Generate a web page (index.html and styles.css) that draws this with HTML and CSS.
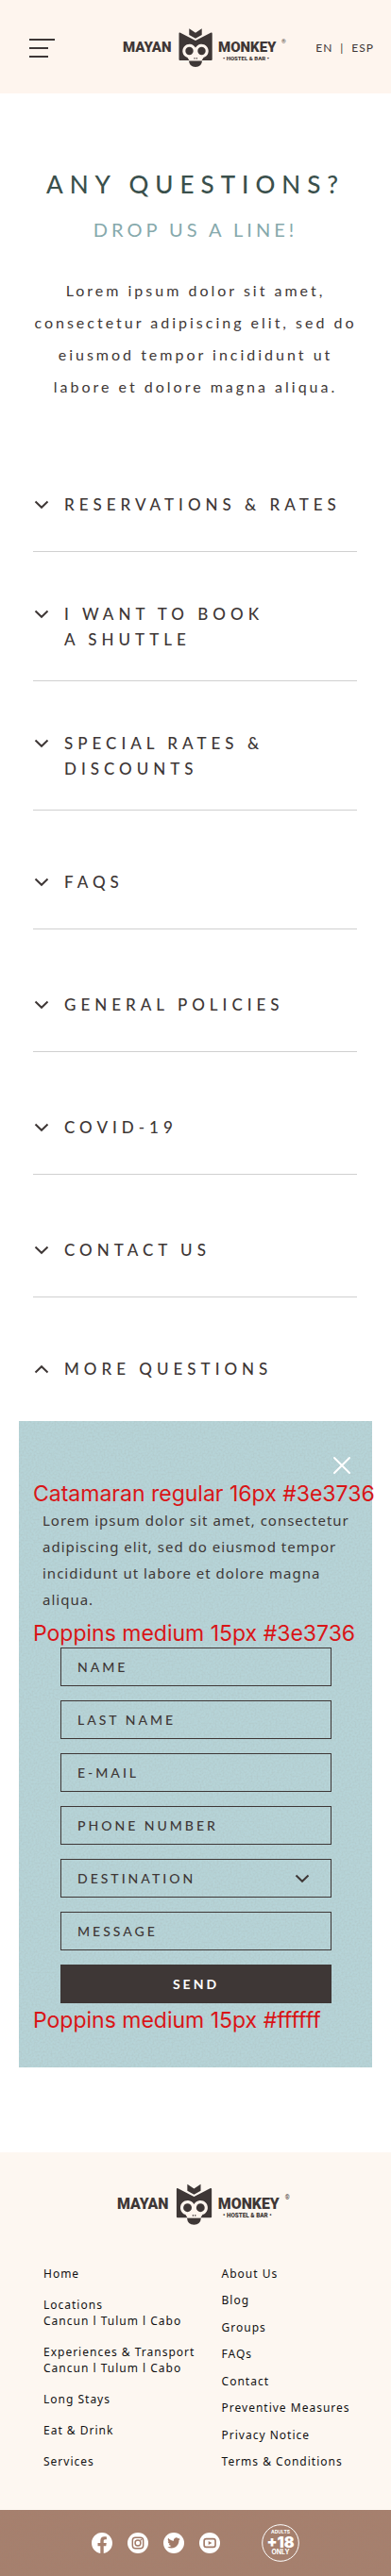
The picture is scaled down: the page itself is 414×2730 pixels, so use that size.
FILE: index.html
```html
<!DOCTYPE html>
<html lang="en">
<head>
<meta charset="utf-8">
<meta name="viewport" content="width=device-width, initial-scale=1">
<title>Mayan Monkey – Any questions?</title>
<link rel="stylesheet" href="styles.css">
</head>
<body>
<svg class="sprite" width="0" height="0" aria-hidden="true">
  <symbol id="monkey" viewBox="0 0 174 43">
    <path fill="#3e3736" d="M70.300 1.300 77 5.800 83.700 1.300V8L77 11.800 70.300 8Z"/>
    <path fill="#3e3736" d="M60.500 5.500 77 14 93.500 5.500Q94.700 5.200 94.700 6.500V34Q94.700 35 93.700 35H60.500Q59.500 35 59.500 34V6.500Q59.500 5.200 60.500 5.500Z"/>
    <path class="logo-mask" d="M77 21.500A7.300 7.300 0 1 1 85.500 32L83.500 35.300H70.500L68.500 32A7.300 7.300 0 1 1 77 21.500Z"/>
    <circle cx="70.500" cy="25" r="4.200" fill="#3e3736"/>
    <circle cx="83.500" cy="25" r="4.200" fill="#3e3736"/>
    <path stroke="#3e3736" stroke-width="1" d="M76 32v1.600M78.300 32v1.600"/>
    <path fill="#3e3736" d="M70 35.500H84Q83.500 42 77 42T70 35.500Z"/>
  </symbol>
  <symbol id="chevron" viewBox="0 0 16 10">
    <path fill="none" stroke="#3e3736" stroke-width="2" d="M1.500 1.500 8 7.800 14.500 1.500"/>
  </symbol>
</svg>

<header class="header">
  <button class="menu" type="button" aria-label="Menu"><span></span><span></span><span></span></button>
  <a class="header-logo" href="#" aria-label="Mayan Monkey">
    <svg viewBox="0 0 174 43">
      <use href="#monkey" width="174" height="43"/>
      <text class="logo-name" x="0" y="26">MAYAN</text>
      <text class="logo-name" x="101" y="26">MONKEY</text>
      <text class="logo-tag" x="106" y="35">• HOSTEL &amp; BAR •</text>
      <text class="logo-reg" x="168" y="17">®</text>
    </svg>
  </a>
  <nav class="lang" aria-label="Language"><a href="#">EN</a><span>|</span><a href="#">ESP</a></nav>
</header>

<main>
  <section class="intro">
    <h1 class="title">ANY QUESTIONS?</h1>
    <p class="subtitle">DROP US A LINE!</p>
    <p class="lead">Lorem ipsum dolor sit amet,<br>consectetur adipiscing elit, sed do<br>eiusmod tempor incididunt ut<br>labore et dolore magna aliqua.</p>
  </section>

  <section class="faq">
    <div class="item first"><button class="toggle" type="button"><svg><use href="#chevron"/></svg><span>RESERVATIONS &amp; RATES</span></button></div>
    <div class="item double"><button class="toggle" type="button"><svg><use href="#chevron"/></svg><span>I WANT TO BOOK<br>A SHUTTLE</span></button></div>
    <div class="item double"><button class="toggle" type="button"><svg><use href="#chevron"/></svg><span>SPECIAL RATES &amp;<br>DISCOUNTS</span></button></div>
    <div class="item"><button class="toggle" type="button"><svg><use href="#chevron"/></svg><span>FAQS</span></button></div>
    <div class="item roomy"><button class="toggle" type="button"><svg><use href="#chevron"/></svg><span>GENERAL POLICIES</span></button></div>
    <div class="item roomy"><button class="toggle" type="button"><svg><use href="#chevron"/></svg><span>COVID-19</span></button></div>
    <div class="item roomy"><button class="toggle" type="button"><svg><use href="#chevron"/></svg><span>CONTACT US</span></button></div>
    <div class="item open"><button class="toggle" type="button" aria-expanded="true"><svg><use href="#chevron"/></svg><span>MORE QUESTIONS</span></button></div>
  </section>

  <section class="panel">
    <button class="close" type="button" aria-label="Close"><svg viewBox="0 0 20 20"><path fill="none" stroke="#fff" stroke-width="2" stroke-linecap="round" d="M2 2 18 18M18 2 2 18"/></svg></button>
    <p class="note">Catamaran regular 16px #3e3736</p>
    <p class="panel-text">Lorem ipsum dolor sit amet, consectetur<br>adipiscing elit, sed do eiusmod tempor<br>incididunt ut labore et dolore magna<br>aliqua.</p>
    <p class="note note-form">Poppins medium 15px #3e3736</p>
    <form class="form">
      <input class="field" type="text" placeholder="NAME" aria-label="Name">
      <input class="field" type="text" placeholder="LAST NAME" aria-label="Last name">
      <input class="field" type="email" placeholder="E-MAIL" aria-label="E-mail">
      <input class="field" type="tel" placeholder="PHONE NUMBER" aria-label="Phone number">
      <select class="field select" aria-label="Destination"><option>DESTINATION</option></select>
      <input class="field" type="text" placeholder="MESSAGE" aria-label="Message">
      <button class="send" type="submit">SEND</button>
    </form>
    <p class="note note-send">Poppins medium 15px #ffffff</p>
  </section>
</main>

<footer>
  <div class="footer">
    <a class="footer-logo" href="#" aria-label="Mayan Monkey">
      <svg viewBox="0 0 174 43">
        <use href="#monkey" width="174" height="43"/>
        <text class="logo-name" x="0" y="26">MAYAN</text>
        <text class="logo-name" x="101" y="26">MONKEY</text>
        <text class="logo-tag" x="106" y="35">• HOSTEL &amp; BAR •</text>
        <text class="logo-reg" x="168" y="17">®</text>
      </svg>
    </a>
    <nav class="links" aria-label="Footer">
      <ul>
        <li><a href="#">Home</a></li>
        <li><a href="#">Locations</a><br><a class="sub" href="#">Cancun l Tulum l Cabo</a></li>
        <li><a href="#">Experiences &amp; Transport</a><br><a class="sub" href="#">Cancun l Tulum l Cabo</a></li>
        <li><a href="#">Long Stays</a></li>
        <li><a href="#">Eat &amp; Drink</a></li>
        <li><a href="#">Services</a></li>
      </ul>
      <ul>
        <li><a href="#">About Us</a></li>
        <li><a href="#">Blog</a></li>
        <li><a href="#">Groups</a></li>
        <li><a href="#">FAQs</a></li>
        <li><a href="#">Contact</a></li>
        <li><a href="#">Preventive Measures</a></li>
        <li><a href="#">Privacy Notice</a></li>
        <li><a href="#">Terms &amp; Conditions</a></li>
      </ul>
    </nav>
  </div>
  <div class="social">
    <a href="#" aria-label="Facebook"><svg class="icon" viewBox="0 0 24 24"><path fill="#fff" d="M24 12.070C24 5.400 18.630 0 12 0S0 5.400 0 12.070C0 18.100 4.390 23.090 10.130 24v-8.440H7.080v-3.490h3.050V9.410c0-3.020 1.790-4.700 4.530-4.700 1.310 0 2.690.24 2.690.24v2.970h-1.520c-1.490 0-1.950.93-1.950 1.890v2.260h3.320l-.53 3.490h-2.790V24C19.610 23.090 24 18.100 24 12.070Z"/></svg></a>
    <a href="#" aria-label="Instagram"><svg class="icon" viewBox="0 0 24 24"><circle cx="12" cy="12" r="12" fill="#fff"/><g fill="none" stroke="#a17a68" stroke-width="1.600"><rect x="5.800" y="5.800" width="12.400" height="12.400" rx="3.200"/><circle cx="12" cy="12" r="3.200"/></g><circle cx="15.700" cy="8.300" r="1" fill="#a17a68"/></svg></a>
    <a href="#" aria-label="Twitter"><svg class="icon" viewBox="0 0 24 24"><circle cx="12" cy="12" r="12" fill="#fff"/><path fill="#a17a68" transform="translate(4.600 4.400) scale(.62)" d="M23.950 4.570a10 10 0 0 1-2.820.77 4.960 4.960 0 0 0 2.160-2.720c-.95.550-2 .950-3.130 1.180a4.920 4.920 0 0 0-8.380 4.480C7.690 8.090 4.070 6.130 1.640 3.160a4.820 4.820 0 0 0-.67 2.480c0 1.710.87 3.210 2.190 4.100a4.900 4.900 0 0 1-2.230-.62v.06a4.920 4.920 0 0 0 3.950 4.830 5 5 0 0 1-2.210.08 4.940 4.940 0 0 0 4.600 3.420A9.870 9.870 0 0 1 0 19.540a13.990 13.990 0 0 0 7.550 2.210c9.050 0 14-7.500 14-13.980 0-.21 0-.42-.02-.63a9.940 9.940 0 0 0 2.460-2.550Z"/></svg></a>
    <a href="#" aria-label="YouTube"><svg class="icon" viewBox="0 0 24 24"><circle cx="12" cy="12" r="12" fill="#fff"/><rect x="5.600" y="7.200" width="13" height="9.600" rx="2.400" fill="none" stroke="#a17a68" stroke-width="1.800"/><path fill="#a17a68" d="M10.600 9.800 14.600 12 10.600 14.200Z"/></svg></a>
    <svg class="adults" viewBox="0 0 40 40" role="img" aria-label="Adults +18 only"><circle cx="20" cy="20" r="19.300" fill="none" stroke="#fff"/><g fill="#fff" text-anchor="middle"><text class="badge-sm" x="20" y="10">ADULTS</text><text class="badge-lg" x="20" y="25">+18</text><text class="badge-md" x="20" y="32">ONLY</text></g></svg>
  </div>
</footer>
</body>
</html>
```
FILE: styles.css
```css
* {
  box-sizing: border-box;
}

body {
  --ink: #3e3736;
  --display: Lato, "Open Sans", sans-serif;
  --text: "Noto Sans", "Open Sans", sans-serif;
  --grain: url("data:image/svg+xml,%3Csvg xmlns='http://www.w3.org/2000/svg' width='200' height='200'%3E%3Cfilter id='n'%3E%3CfeTurbulence type='fractalNoise' baseFrequency='.5' numOctaves='2' stitchTiles='stitch'/%3E%3CfeColorMatrix values='0 0 0 0 .3 0 0 0 0 .25 0 0 0 0 .2 .25 0 0 0 -.08'/%3E%3C/filter%3E%3Crect width='200' height='200' filter='url(%23n)'/%3E%3C/svg%3E");
  margin: 0;
  background: #fff;
  color: var(--ink);
  font-family: var(--text);
}

h1,
p,
ul {
  margin: 0;
  padding: 0;
  font-weight: 400;
}

ul {
  list-style: none;
}

a {
  color: inherit;
  text-decoration: none;
}

button {
  padding: 0;
  border: 0;
  background: none;
  color: inherit;
  cursor: pointer;
}

svg {
  display: block;
}

.sprite {
  position: absolute;
}

/* Logo */
.logo-name {
  font: 900 15px Roboto, sans-serif;
  fill: #3e3736;
}

.logo-tag {
  font: 900 6px Roboto, sans-serif;
  fill: #3e3736;
}

.logo-reg {
  font: 400 6px Roboto, sans-serif;
  fill: #3e3736;
}

.logo-mask {
  fill: #fff5ee;
}

/* Header */
.header {
  display: flex;
  align-items: center;
  gap: 30px;
  height: 99px;
  padding: 2px 18px 0 31px;
  background: #fef5ee;
}

.menu {
  display: flex;
  flex-direction: column;
  gap: 7px;
  width: 27px;
}

.menu span {
  width: 20px;
  height: 2px;
  background: var(--ink);
}

.menu span:first-child {
  width: 27px;
}

.header-logo {
  margin-left: auto;
}

.header-logo svg {
  width: 174px;
  height: 43px;
}

.lang {
  display: flex;
  gap: 8px;
  font: 400 12px/20px var(--display);
  letter-spacing: 1px;
}

/* Intro */
.intro {
  padding-top: 76px;
  text-align: center;
}

.title {
  color: #3a504c;
  font: 500 26px/40px var(--display);
  letter-spacing: 7px;
}

.subtitle {
  margin-top: 12px;
  color: #86a9ac;
  font: 400 20px/32px var(--display);
  letter-spacing: 4px;
}

.lead {
  margin-top: 32px;
  font: 400 16px/34px var(--display);
  letter-spacing: 3px;
  white-space: nowrap;
}

/* Questions */
.faq {
  margin: 94px 36px 0 35px;
}

.item {
  padding: 62px 0 36px;
  border-bottom: 1px solid #d0d0d0;
}

.item.first {
  padding-top: 0;
}

.item.double {
  padding: 52px 0 30px;
}

.item.roomy {
  padding-top: 66px;
}

.item.open {
  padding-bottom: 42px;
  border-bottom: 0;
}

.toggle {
  display: flex;
  gap: 16px;
  width: 100%;
  padding-left: 1px;
  font: 500 17px/27px var(--display);
  letter-spacing: 5px;
  text-align: left;
  white-space: nowrap;
}

.toggle svg {
  flex: none;
  width: 16px;
  height: 10px;
  margin-top: 9px;
}

.open .toggle svg {
  transform: rotate(180deg);
}

/* Contact panel */
.panel {
  margin: 0 20px;
  padding: 37px 0 36px;
  background: var(--grain) #b6d4d8;
}

.close {
  display: block;
  width: 20px;
  height: 20px;
  margin: 0 22px 0 auto;
}

.note {
  margin: 6px 0 0 15px;
  color: #d91517;
  font: 400 23px/28px Inter, sans-serif;
  white-space: nowrap;
}

.note-form {
  margin-top: 8px;
}

.note-send {
  margin-top: 4px;
}

.panel-text {
  padding-left: 25px;
  font-size: 15px;
  line-height: 28px;
  letter-spacing: 1px;
  white-space: nowrap;
}

.form {
  display: flex;
  flex-direction: column;
  gap: 15px;
  margin: 1px 43px 0 44px;
}

.field,
.send {
  width: 100%;
  height: 41px;
  margin: 0;
  border-radius: 0;
  font: 500 14px/20px var(--display);
  letter-spacing: 3px;
}

.field {
  padding: 0 17px;
  border: 1px solid var(--ink);
  outline: 0;
  background: transparent;
  color: var(--ink);
}

.field::placeholder {
  color: var(--ink);
  opacity: 1;
}

.select {
  appearance: none;
  background: url("data:image/svg+xml,%3Csvg xmlns='http://www.w3.org/2000/svg' viewBox='0 0 16 10'%3E%3Cpath fill='none' stroke='%233e3736' stroke-width='2' d='M1.500 1.500 8 7.800 14.500 1.500'/%3E%3C/svg%3E") right 22px center / 16px 10px no-repeat;
}

.send {
  background: var(--ink);
  color: #fff;
  font-weight: 700;
}

/* Footer */
.footer {
  margin-top: 90px;
  padding: 32px 38px 43px 46px;
  background: #fdf7f1;
}

.footer-logo {
  display: block;
  padding-left: 10px;
}

.footer-logo svg {
  width: 184px;
  height: 46px;
  margin: 0 auto;
}

.links {
  display: grid;
  grid-template-columns: 4fr 3fr;
  margin-top: 42px;
  color: #111;
  font-size: 12px;
  font-weight: 500;
  line-height: 17px;
  letter-spacing: 1px;
  white-space: nowrap;
}

.links ul {
  display: flex;
  flex-direction: column;
  justify-content: space-between;
  min-height: 216px;
}

.sub {
  font-weight: 400;
}

.social {
  display: flex;
  align-items: center;
  justify-content: center;
  gap: 16px;
  height: 70px;
  background: var(--grain) #a67f6d;
}

.icon {
  width: 22px;
  height: 22px;
}

.adults {
  width: 40px;
  height: 40px;
  margin-left: 28px;
}

.badge-sm {
  font: 700 5px Inter, sans-serif;
}

.badge-md {
  font: 700 7px Inter, sans-serif;
}

.badge-lg {
  font: 900 16px Inter, sans-serif;
}
```
